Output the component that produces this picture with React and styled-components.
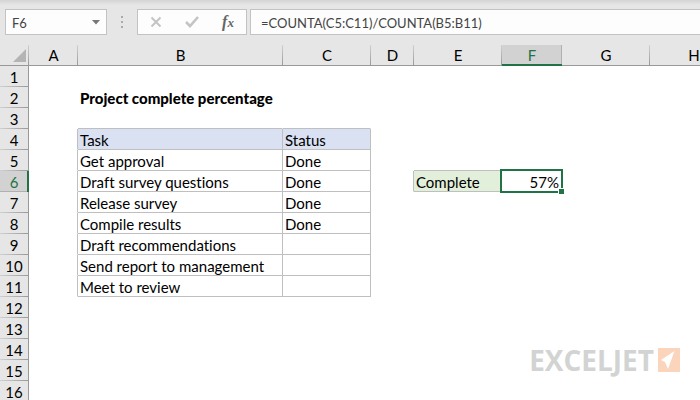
import React from "react";
import styled, { createGlobalStyle, css } from "styled-components";

const GREEN = "#217346";
const LINE = "#bfbfbf";
const HEADER_LINE = "#999999";

const GlobalStyle = createGlobalStyle`
  *, *::before, *::after { box-sizing: border-box; }
  html, body { margin: 0; background: #ffffff; }
  body, input, button {
    font-family: Lato, "Liberation Sans", sans-serif;
    font-size: 15px;
    font-variant-ligatures: none;
  }
`;

const Workbook = styled.main`
  position: relative;
  height: 100vh;
  overflow: hidden;
  background: #ffffff;
  color: #000000;
`;

const FormulaBar = styled.div`
  display: flex;
  height: 45px;
  padding: 9px 0 10px 5px;
  background: linear-gradient(#d4d4d4, #e6e6e6 5px);
`;

const NameBox = styled.div`
  display: flex;
  flex: 0 0 102px;
  min-width: 0;
  border: 1px solid #c3c3c3;
  background: #fdfdfd;
`;

const BarInput = styled.input`
  flex: 1;
  min-width: 0;
  padding: 1px 0 0 6px;
  border: 0;
  outline: 0;
  background: transparent;
  color: #444444;
  font-size: 13px;
`;

const BarButton = styled.button`
  display: flex;
  align-items: center;
  justify-content: center;
  width: ${(p) => p.$width || 36}px;
  padding: 0;
  border: 0;
  background: transparent;
  color: #c4c4c4;
`;

const Grip = styled.div`
  display: flex;
  flex: 0 0 30px;
  flex-direction: column;
  align-items: center;
  justify-content: center;
  gap: 3px;
`;

const GripDot = styled.span`
  width: 2px;
  height: 2px;
  background: #aaaaaa;
`;

const Actions = styled.div`
  display: flex;
  flex: 0 0 110px;
  margin-right: 3px;
  border: 1px solid #c3c3c3;
  background: #fdfdfd;
`;

const FunctionMark = styled.span`
  color: #666666;
  font: italic bold 16px/20px "Liberation Serif", serif;

  small { font-size: 13px; }
`;

const FormulaBox = styled.div`
  display: flex;
  flex: 1;
  min-width: 0;
  padding-left: 4px;
  border: 1px solid #c3c3c3;
  border-right: 0;
  background: #fdfdfd;
`;

const Sheet = styled.table`
  width: 738px;
  table-layout: fixed;
  border-collapse: separate;
  border-spacing: 0;
  line-height: 20px;
`;

const Column = styled.col`
  width: ${(p) => p.$width}px;
`;

const Corner = styled.td`
  height: 21px;
  padding: 0 3px 3px 0;
  border-bottom: 1px solid ${HEADER_LINE};
  background:
    linear-gradient(#d0d0d0, ${HEADER_LINE}) right / 1px 100% no-repeat,
    #e6e6e6;
  line-height: 0;
  text-align: right;
  vertical-align: bottom;
`;

const ColumnHeader = styled.th`
  height: 21px;
  padding: 1px 0 0;
  border-bottom: 1px solid ${HEADER_LINE};
  background:
    linear-gradient(#d0d0d0, ${HEADER_LINE}) right / 1px 100% no-repeat,
    #e6e6e6;
  font-weight: 400;
  line-height: 19px;

  ${(p) => p.$active && css`
    background: #d2d2d2;
    color: ${GREEN};
    border-bottom-color: ${GREEN};
    box-shadow: inset 0 -1px ${GREEN}, inset -1px 0 #b0b0b0;
  `}
`;

const RowHeader = styled.th`
  height: 21px;
  padding: 1px 0 0;
  border-right: 1px solid ${HEADER_LINE};
  background:
    linear-gradient(90deg, #d0d0d0, ${HEADER_LINE}) bottom / 100% 1px no-repeat,
    #e6e6e6;
  font-weight: 400;

  ${(p) => p.$active && css`
    background: #d2d2d2;
    color: ${GREEN};
    border-right-color: ${GREEN};
    box-shadow: inset -1px 0 ${GREEN}, inset 0 -1px #b0b0b0;
  `}
`;

const fills = { heading: "#d9e1f2", label: "#e2efda" };

const Cell = styled.td`
  position: relative;
  height: 21px;
  padding: 2px 2px 0;
  border-right: 1px solid ${(p) => (p.$right ? LINE : "transparent")};
  border-bottom: 1px solid ${(p) => (p.$bottom ? LINE : "transparent")};
  background: ${(p) => fills[p.$fill] || "transparent"};
  background-clip: padding-box;
  font-weight: ${(p) => (p.$bold ? 900 : 400)};
  line-height: 18px;
  text-align: ${(p) => (p.$number ? "right" : "left")};
  white-space: nowrap;
`;

const Selection = styled.span`
  position: absolute;
  inset: -2px;
  border: 2px solid ${GREEN};
  pointer-events: none;

  &::after {
    content: "";
    position: absolute;
    right: -4px;
    bottom: -4px;
    width: 7px;
    height: 7px;
    border: 1px solid #ffffff;
    background: ${GREEN};
  }
`;

const Brand = styled.div`
  position: absolute;
  right: 20px;
  bottom: 20px;
  display: flex;
  align-items: center;
  gap: 4px;
  color: #d2d4d3;
  font: 700 28px/40px "Open Sans", sans-serif;
`;

const columns = [
  ["A", 49], ["B", 205], ["C", 88], ["D", 43],
  ["E", 88], ["F", 60], ["G", 88], ["H", 88],
];

const tasks = [
  ["Get approval", "Done"],
  ["Draft survey questions", "Done"],
  ["Release survey", "Done"],
  ["Compile results", "Done"],
  ["Draft recommendations", ""],
  ["Send report to management", ""],
  ["Meet to review", ""],
];

const values = {
  B2: "Project complete percentage",
  B4: "Task",
  C4: "Status",
  E6: "Complete",
  F6: "57%",
};
tasks.forEach(([task, status], i) => {
  values[`B${i + 5}`] = task;
  values[`C${i + 5}`] = status;
});

const rows = Array.from({ length: 16 }, (_, i) => i + 1);

function cellStyle(col, row) {
  const inTable = row >= 4 && row <= 11;
  return {
    $right: ("ABC".includes(col) && inTable) || ("DE".includes(col) && row === 6),
    $bottom:
      ("BC".includes(col) && row >= 3 && row <= 11) ||
      (col === "E" && (row === 5 || row === 6)),
    $fill:
      "BC".includes(col) && row === 4 ? "heading"
      : col === "E" && row === 6 ? "label"
      : undefined,
    $bold: row === 2,
    $number: col === "F",
  };
}

export default function App() {
  return (
    <Workbook>
      <GlobalStyle />
      <FormulaBar>
        <NameBox>
          <BarInput aria-label="Name box" defaultValue="F6" />
          <BarButton type="button" $width={20} aria-label="Show names">
            <svg width="8" height="5" viewBox="0 0 8 5">
              <path d="M0 0h8L4 4.5z" fill="#777777" />
            </svg>
          </BarButton>
        </NameBox>
        <Grip>
          <GripDot />
          <GripDot />
          <GripDot />
        </Grip>
        <Actions>
          <BarButton type="button" aria-label="Cancel">
            <svg width="12" height="12" viewBox="0 0 12 12">
              <path d="M1.5 1.5l9 9M10.5 1.5l-9 9" stroke="currentColor" strokeWidth="2" />
            </svg>
          </BarButton>
          <BarButton type="button" aria-label="Enter">
            <svg width="14" height="12" viewBox="0 0 14 12">
              <path d="M1 6l4 4 8-9" fill="none" stroke="currentColor" strokeWidth="2.6" />
            </svg>
          </BarButton>
          <BarButton type="button" aria-label="Insert function">
            <FunctionMark>f<small>x</small></FunctionMark>
          </BarButton>
        </Actions>
        <FormulaBox>
          <BarInput aria-label="Formula" defaultValue="=COUNTA(C5:C11)/COUNTA(B5:B11)" />
        </FormulaBox>
      </FormulaBar>

      <Sheet>
        <colgroup>
          <Column $width={29} />
          {columns.map(([name, width]) => <Column key={name} $width={width} />)}
        </colgroup>
        <thead>
          <tr>
            <Corner>
              <svg width="13" height="13" viewBox="0 0 13 13">
                <path d="M13 0v13H0z" fill="#b4b4b4" />
              </svg>
            </Corner>
            {columns.map(([name]) => (
              <ColumnHeader key={name} scope="col" $active={name === "F"}>{name}</ColumnHeader>
            ))}
          </tr>
        </thead>
        <tbody>
          {rows.map((row) => (
            <tr key={row}>
              <RowHeader scope="row" $active={row === 6}>{row}</RowHeader>
              {columns.map(([name]) => (
                <Cell key={name} {...cellStyle(name, row)}>
                  {values[name + row]}
                  {name === "F" && row === 6 && <Selection />}
                </Cell>
              ))}
            </tr>
          ))}
        </tbody>
      </Sheet>

      <Brand>
        EXCELJET
        <svg width="22" height="24" viewBox="0 0 22 24">
          <path d="M0 0h22v24H0z" fill="#fbd5bb" />
          <path d="M16.5 3L3 12l4 2 3 7z" fill="#ffffff" />
        </svg>
      </Brand>
    </Workbook>
  );
}
